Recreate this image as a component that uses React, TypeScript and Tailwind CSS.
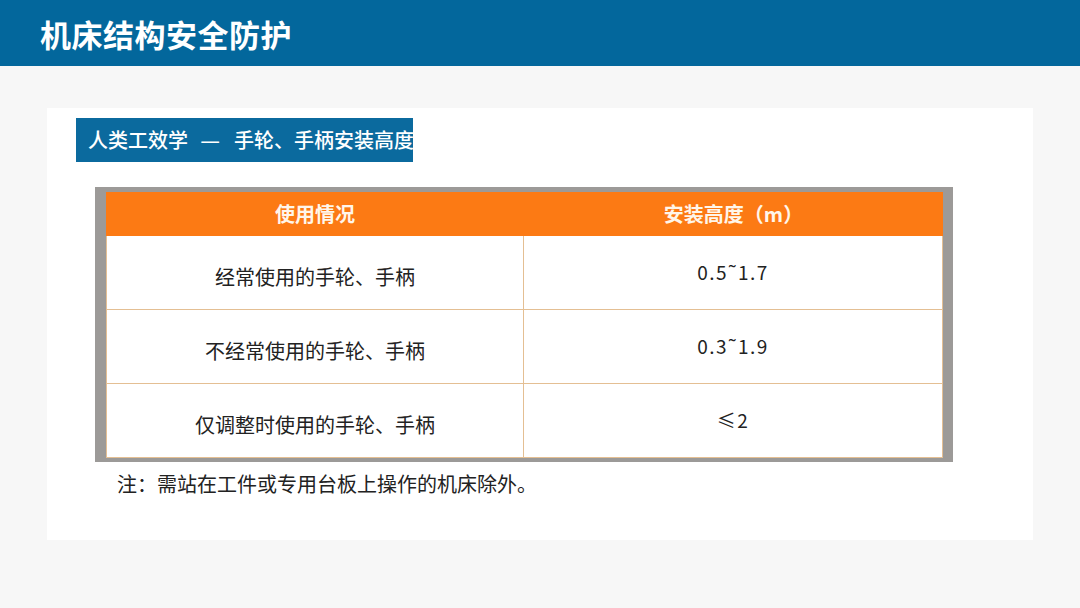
const rows = [
  { usage: '经常使用的手轮、手柄', height: '0.5˜1.7' },
  { usage: '不经常使用的手轮、手柄', height: '0.3˜1.9' },
  { usage: '仅调整时使用的手轮、手柄', height: '≤2' },
];

export default function App() {
  return (
    <div
      className="w-[1080px] h-[608px] bg-[#f7f7f7] overflow-hidden"
      style={{ fontFamily: '"Noto Sans CJK SC", "Noto Sans", sans-serif' }}
    >
      {/* Header */}
      <div className="h-[66px] bg-[#03679c] flex items-center pl-[40px]">
        <h1 className="text-[31px] font-bold text-white leading-none tracking-[0.5px]">机床结构安全防护</h1>
      </div>

      {/* Content panel */}
      <div className="mt-[42px] ml-[47px] w-[986px] h-[432px] bg-white pt-[10px]">
        <div className="ml-[29px] w-[337px] h-[44px] bg-[#0b6a9e] flex items-center pl-[12px] text-[20px] text-white leading-none whitespace-nowrap font-medium">
          <span>人类工效学</span>
          <span className="ml-[13px] mr-[17px] inline-block w-[16px] text-center scale-x-[1.1]">—</span>
          <span>手轮、手柄安装高度</span>
        </div>

        {/* Table with frame */}
        <div className="mt-[25px] ml-[48px] w-[858px] bg-[#9c9a98] pt-[5px] pl-[11px] pr-[10px] pb-[4px]">
          <div className="bg-white">
            <div className="h-[44px] bg-[#fc7a14] grid grid-cols-[418px_1fr] text-[#fff6ea] text-[20px] font-semibold">
              <div className="flex items-center justify-center">使用情况</div>
              <div className="flex items-center justify-center">安装高度（m）</div>
            </div>
            <div className="border-x border-b border-[#e4bf93]">
              {rows.map((r, i) => (
                <div
                  key={i}
                  className={
                    i === 0
                      ? 'grid grid-cols-[417px_1fr] h-[73px] text-[20px] text-[#222]'
                      : 'grid grid-cols-[417px_1fr] h-[74px] text-[20px] text-[#222] border-t border-[#e4bf93]'
                  }
                >
                  <div className="flex items-center justify-center pt-[8px] border-r border-[#e4bf93]">{r.usage}</div>
                  <div className="flex items-center justify-center pb-[1px] text-[19px] tracking-[1.5px]">{r.height}</div>
                </div>
              ))}
            </div>
          </div>
        </div>

        <p className="mt-[10px] ml-[70px] text-[20px] leading-[24px] text-[#222]">注：需站在工件或专用台板上操作的机床除外。</p>
      </div>
    </div>
  );
}
